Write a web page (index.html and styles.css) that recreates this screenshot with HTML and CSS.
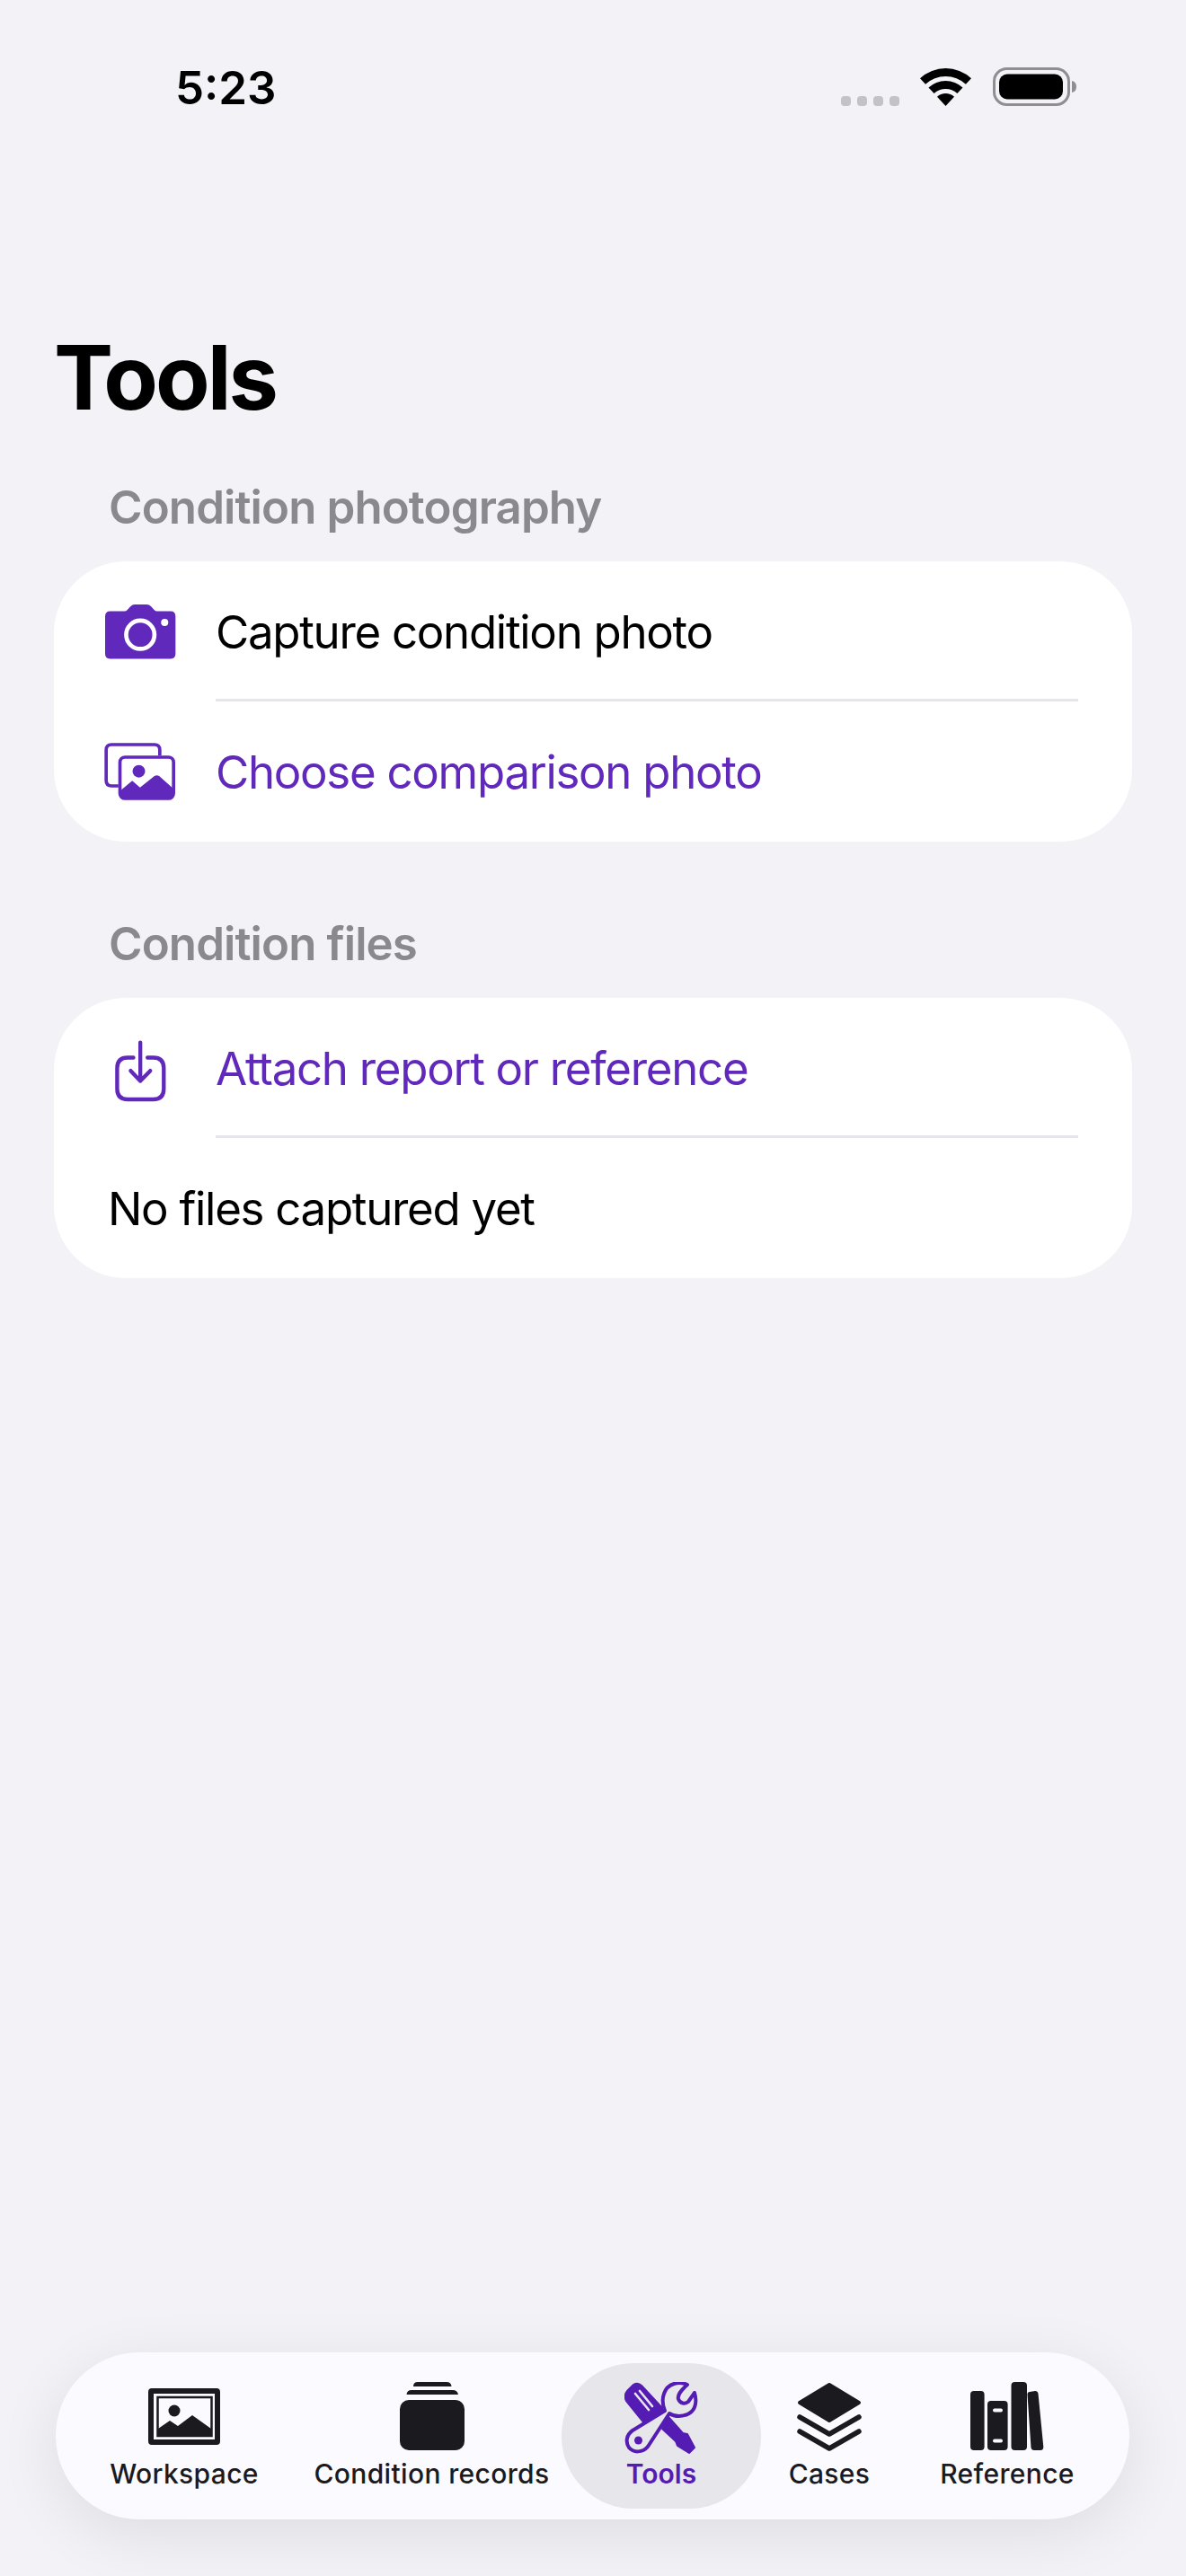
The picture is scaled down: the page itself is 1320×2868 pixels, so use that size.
FILE: index.html
```html
<!DOCTYPE html>
<html lang="en">
<head>
<meta charset="utf-8">
<title>Tools</title>
<link rel="stylesheet" href="styles.css">
</head>
<body>
<div class="page">
  <header class="status">
    <span class="time">5:23</span>
    <div class="status-icons">
      <div class="dots"><i></i><i></i><i></i><i></i></div>
      <svg class="wifi" width="57" height="42" viewBox="0 0 57 42"><path d="M0 11.2A42 42 0 0 1 57 11.2L50.9 17.8A33 33 0 0 0 6.06 17.8Z"/><path d="M9.46 21.5A28 28 0 0 1 47.5 21.5L41.4 28.1A19 19 0 0 0 15.6 28.1Z"/><path d="M28.5 42L19 31.7A14 14 0 0 1 38 31.7Z"/></svg>
      <svg class="battery" width="93" height="43" viewBox="0 0 93 43"><rect x="1.5" y="1.5" width="83" height="40" rx="14" fill="none" stroke="#8e8e93" stroke-width="3"/><rect x="7" y="7.500" width="71" height="28" rx="9"/><path d="M88 15q5 1 5 6.500t-5 6.500z" fill="#8e8e93"/></svg>
    </div>
  </header>

  <h1 class="title">Tools</h1>

  <section class="section">
    <h2 class="section-head">Condition photography</h2>
    <div class="card">
      <div class="row">
        <svg class="row-icon" width="82" height="64" viewBox="225 155 245 190"><path fill="#6029bb" d="M231 200q0-17 17-17h47q6 0 10-5l10-11q7-7 14-7h40q9 0 15 7l10 11q4 5 10 5h45q16 0 16 17v125q0 16-16 16H247q-16 0-16-16z"/><circle cx="348" cy="261" r="47" fill="none" stroke="#fff" stroke-width="14"/><circle cx="429" cy="220" r="12" fill="#fff"/></svg>
        <span class="row-text">Capture condition photo</span>
      </div>
      <div class="divider"></div>
      <div class="row">
        <svg class="row-icon" width="82" height="66" viewBox="225 618 245 198"><g fill="none" stroke="#6029bb" stroke-width="11"><path d="M275 765H252Q234 765 234 747V645Q234 627 252 627H395Q413 627 413 645V664"/><rect x="280" y="669" width="179" height="138" rx="17"/></g><circle cx="343" cy="716" r="21" fill="#6029bb"/><path fill="#6029bb" d="M285 778L321 748L347 770L395 732Q403 727 411 732L459 775V795Q459 807 447 807H292Q280 807 280 795z"/></svg>
        <span class="row-text accent">Choose comparison photo</span>
      </div>
    </div>
  </section>

  <section class="section">
    <h2 class="section-head">Condition files</h2>
    <div class="card">
      <div class="row">
        <svg class="row-icon" width="82" height="78" viewBox="225 150 245 233"><g fill="none" stroke="#6029bb" stroke-width="13" stroke-linecap="round" stroke-linejoin="round"><path d="M325 232H306Q271 232 271 267V336Q271 371 306 371H391Q426 371 426 336V267Q426 232 391 232H372"/><path d="M348 182V310M316 276L348 310L381 276"/></g></svg>
        <span class="row-text accent">Attach report or reference</span>
      </div>
      <div class="divider"></div>
      <div class="row plain">
        <span class="row-text">No files captured yet</span>
      </div>
    </div>
  </section>

  <nav class="tabbar">
    <div class="tab">
      <svg width="80" height="80" viewBox="0 0 80 80"><rect x="3" y="10" width="74" height="57" rx="1" fill="none" stroke="#1b1b1f" stroke-width="6"/><rect x="10.500" y="17" width="60" height="43" fill="none" stroke="#1b1b1f" stroke-width="2.500"/><ellipse cx="29" cy="32" rx="6.500" ry="6.500" fill="#1b1b1f"/><path fill="#1b1b1f" d="M11 52L24 43L33 49L49 37L70 52V60H11z"/></svg>
      <span class="tab-label">Workspace</span>
    </div>
    <div class="tab">
      <svg width="72" height="80" viewBox="0 0 72 80"><rect x="0" y="20" width="72" height="56" rx="10" fill="#1b1b1f"/><path fill="#1b1b1f" d="M7.500 14Q8 9 13 9H59Q64 9 65 14zM15 5Q15 0 20 0H52Q57 0 57.500 5z"/></svg>
      <span class="tab-label">Condition records</span>
    </div>
    <div class="tab active">
      <svg width="82" height="80" viewBox="0 0 82 80"><path fill="#551cb3" stroke="#551cb3" stroke-width="2" stroke-linejoin="round" d="M3 10L10 3Q15 0 19 4L44 31L23 47L2 21Q-1 15 3 10zM42 52L49 39L65 57L70 58L78 73L72 79L59 71L57 66z"/><path stroke="#e7e7eb" stroke-width="2.600" stroke-linecap="round" d="M12 13L27 31M17 10L31 27"/><path fill="#e7e7eb" stroke="#551cb3" stroke-width="4" stroke-linejoin="round" d="M70 3C61 -1 48 1 44 13C41 21 43 27 45 32L9 54C2 59 1 67 5 73C10 79 20 79 26 72L50 35C56 39 65 39 72 35C79 31 81 22 78 12L71 22C67 25 62 24 60 19C59 15 61 11 70 3z"/><circle cx="15.500" cy="65" r="4.500" fill="#551cb3"/></svg>
      <span class="tab-label">Tools</span>
    </div>
    <div class="tab">
      <svg width="72" height="80" viewBox="0 0 72 80"><path fill="#1b1b1f" stroke="#1b1b1f" stroke-width="4" stroke-linejoin="round" d="M36 3L69 23L36 43L3 23z"/><path fill="none" stroke="#1b1b1f" stroke-width="5.500" stroke-linecap="round" stroke-linejoin="round" d="M3 39L36 58L69 39M3 55L36 74L69 55"/></svg>
      <span class="tab-label">Cases</span>
    </div>
    <div class="tab">
      <svg width="82" height="80" viewBox="0 0 82 80"><rect x="0" y="10" width="15.600" height="66" rx="4" fill="#1b1b1f"/><rect x="19" y="21" width="22.600" height="55" rx="4" fill="#1b1b1f"/><rect x="45.500" y="0" width="17.500" height="76" rx="4" fill="#1b1b1f"/><path fill="#1b1b1f" d="M63.500 14Q63.500 11 66 11L72 10Q75 10 75.500 13L81.300 72Q81.500 76 78 76H71Q68 76 67.500 73z"/><rect x="25" y="29.500" width="11" height="4" rx="2" fill="#fafaff"/><rect x="25" y="63.500" width="11" height="4" rx="2" fill="#fafaff"/></svg>
      <span class="tab-label">Reference</span>
    </div>
  </nav>
</div>
</body>
</html>
```

FILE: styles.css
```css
* { box-sizing: border-box; }
html, body { margin: 0; padding: 0; }
body {
  background: #f2f2f7;
  font-family: Inter, "Liberation Sans", sans-serif;
  color: #000;
}
.page {
  height: 2868px;
  display: flex;
  flex-direction: column;
  padding: 0 60px 63px;
  overflow: hidden;
}
.status {
  flex: none;
  height: 135px;
  margin-right: 62px;
  padding: 58px 0 0 135px;
  display: flex;
  justify-content: space-between;
  align-items: flex-start;
}
.time {
  font-size: 51px;
  font-weight: 600;
  line-height: 80px;
  height: 80px;
}
.status-icons {
  display: flex;
  align-items: flex-end;
  padding-top: 17px;
}
.dots { display: flex; gap: 7px; margin-right: 23px; }
.dots i { width: 11px; height: 11px; border-radius: 4px; background: #c2c2c7; }
.wifi { margin-right: 24px; display: block; }
.battery { display: block; }
.title {
  margin: 230px 0 0 0;
  font-size: 99px;
  line-height: 110px;
  font-weight: 700;
  letter-spacing: -3px;
}
.section-head {
  margin: 0;
  padding: 60px 0 0 61px;
  height: 150px;
  font-size: 51px;
  line-height: 60px;
  font-weight: 600;
  color: #8a8a8e;
  letter-spacing: -0.9px;
}
.section + .section .section-head { padding-top: 84px; height: 174px; }
.card {
  background: #fff;
  border-radius: 80px;
  padding-right: 60px;
}
.row {
  height: 155px;
  padding-left: 55px;
  display: flex;
  align-items: center;
  gap: 43px;
}
.divider + .row { height: 156px; }
.row.plain { padding-left: 60px; }
.divider {
  height: 3px;
  margin-left: 180px;
  margin-top: -2px;
  background: #e6e6ea;
}
.row-icon { display: block; flex: none; }
.row-text { font-size: 51px; line-height: 60px; padding-top: 2px; letter-spacing: -1.3px; }
.accent { color: #6029bb; }
.tabbar {
  flex: none;
  margin: auto 3px 0 2px;
  height: 186px;
  border-radius: 93px;
  background: #fafaff;
  box-shadow: 0 16px 70px rgba(0,0,0,.09);
  padding: 12px 14px 12px 12px;
  display: grid;
  grid-template-columns: 262px 289px 222px 152px 244px;
}
.tab {
  display: flex;
  flex-direction: column;
  align-items: center;
  padding-top: 21px;
  border-radius: 80px;
  color: #1b1b1f;
}
.tab svg { display: block; flex: none; }
.tab.active { background: #e7e7eb; color: #551cb3; }
.tab-label {
  font-size: 30px;
  line-height: 44px;
  font-weight: 500;
  letter-spacing: 0.35px;
  white-space: nowrap;
}
.tab.active .tab-label { font-weight: 600; letter-spacing: 0; }
```
